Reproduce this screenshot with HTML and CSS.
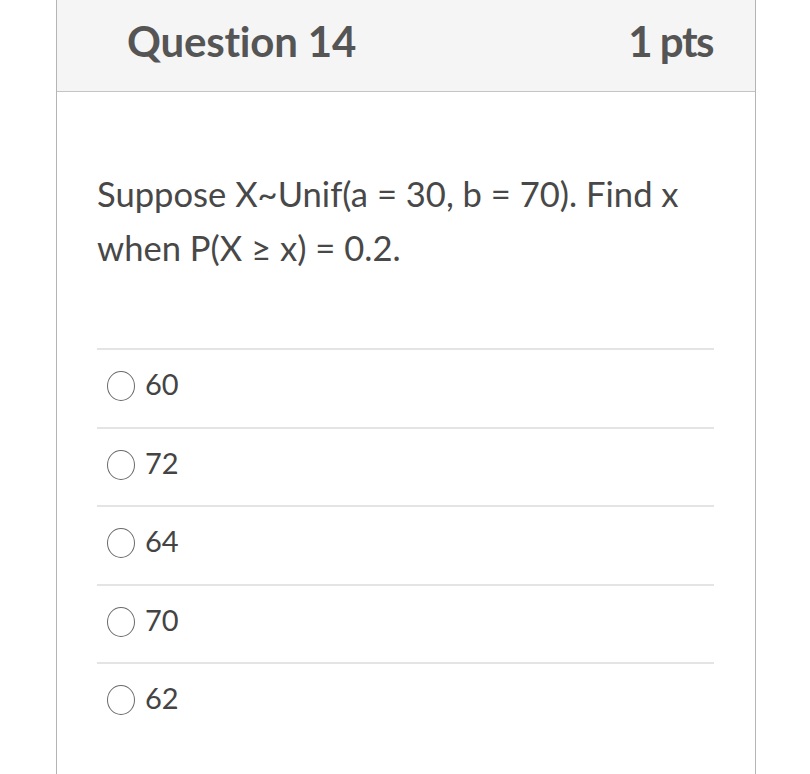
FILE: index.html
```html
<!DOCTYPE html>
<html>
<head>
<meta charset="utf-8">
<link rel="stylesheet" href="styles.css">
</head>
<body>
<div class="card">
  <div class="header">
    <span class="title">Question 14</span>
    <span class="pts">1 pts</span>
  </div>
  <div class="content">
    <p class="question">Suppose X~Unif(a = 30, b = 70). Find x when P(X ≥ x) = 0.2.</p>
    <div class="answers">
      <div class="answer"><span class="radio"></span><span class="label">60</span></div>
      <div class="answer"><span class="radio"></span><span class="label">72</span></div>
      <div class="answer"><span class="radio"></span><span class="label">64</span></div>
      <div class="answer"><span class="radio"></span><span class="label">70</span></div>
      <div class="answer"><span class="radio"></span><span class="label">62</span></div>
    </div>
  </div>
</div>
</body>
</html>
```

FILE: styles.css
```css
html, body {
  margin: 0;
  padding: 0;
  background: #ffffff;
  font-family: Lato, "Liberation Sans", sans-serif;
}
.card {
  margin-left: 56px;
  width: 698px;
  height: 774px;
  border-left: 1px solid #b5b5b5;
  border-right: 1px solid #b5b5b5;
  box-sizing: content-box;
}
.header {
  height: 92px;
  box-sizing: border-box;
  background: #f5f5f5;
  border-bottom: 1px solid #c4c4c4;
  display: flex;
  align-items: center;
  justify-content: space-between;
  padding: 0 42px 10px 70px;
  color: #555555;
  font-weight: bold;
  font-size: 42px;
}
.title {
  letter-spacing: -0.2px;
}
.pts {
  letter-spacing: -1.5px;
}
.content {
  padding: 75px 41px 0 40px;
}
.question {
  margin: 0;
  font-size: 34.6px;
  line-height: 54px;
  color: #484848;
}
.answers {
  margin-top: 73px;
}
.answer {
  border-top: 2px solid #e4e4e4;
  height: 76.5px;
  box-sizing: content-box;
  display: flex;
  align-items: center;
  padding-left: 10px;
  gap: 10px;
}
.answer > .radio {
  margin-bottom: 4px;
}
.radio {
  width: 26px;
  height: 28px;
  border: 1.5px solid #6a6a6a;
  border-radius: 50%;
  flex: none;
}
.label {
  font-size: 29px;
  color: #444444;
  margin-bottom: 9px;
}
```
